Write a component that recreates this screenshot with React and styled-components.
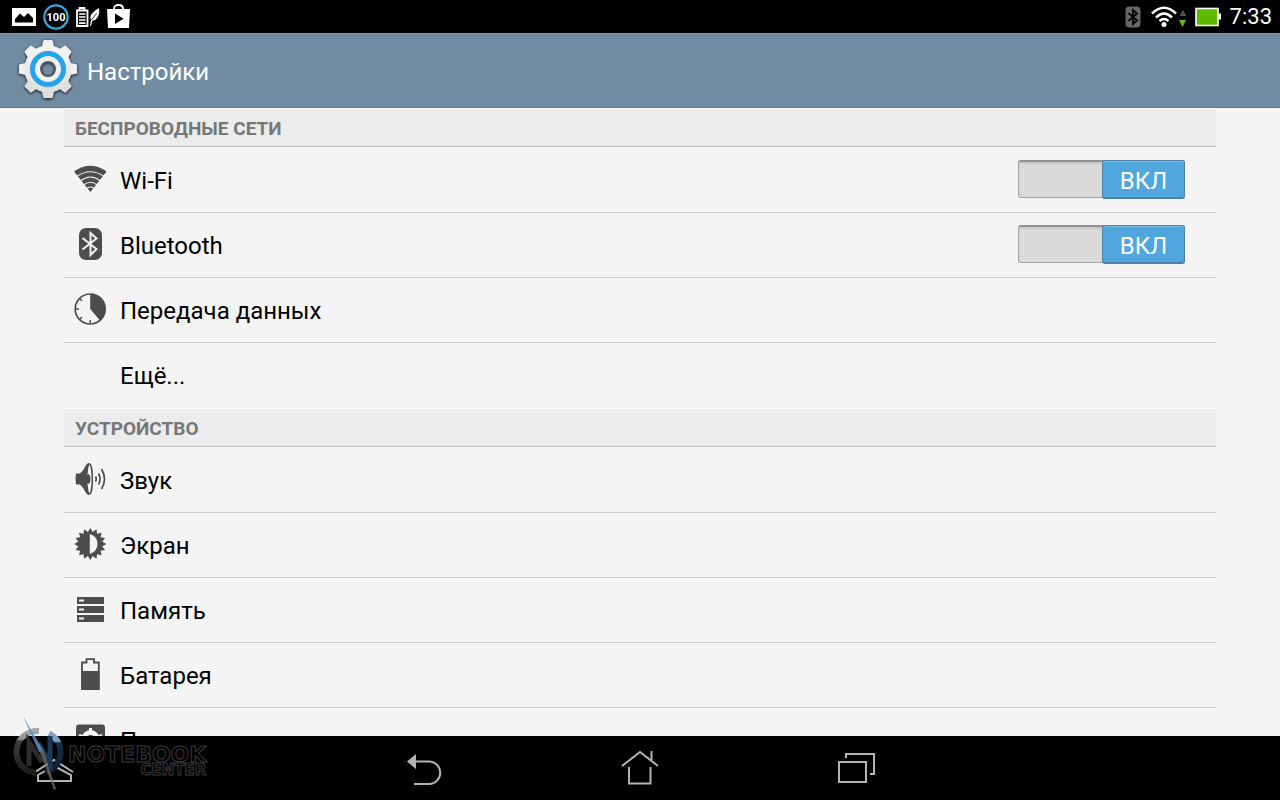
import React, { useState } from 'react';
import styled, { createGlobalStyle } from 'styled-components';

const GlobalStyle = createGlobalStyle`
    * {
        box-sizing: border-box;
    }
    body {
        margin: 0;
        background: #f4f4f4;
        font-family: Roboto, "Noto Sans", sans-serif;
    }
    svg {
        display: block;
        flex: none;
    }
`

const Screen = styled.div`
    position: relative;
    display: flex;
    flex-direction: column;
    height: 100vh;
    overflow: hidden;
`

const StatusBar = styled.div`
    display: flex;
    flex: none;
    align-items: center;
    justify-content: space-between;
    height: 33px;
    padding: 0 8px 0 12px;
    background: #000;
    color: #fff;
    font-size: 22px;
    line-height: 32px;
`

const StatusGroup = styled.div`
    display: flex;
    align-items: center;
    gap: ${props => props.$gap}px;
`

const TitleBar = styled.header`
    display: flex;
    flex: none;
    align-items: center;
    gap: 7px;
    height: 75px;
    padding: 0 16px;
    background: #718ba3;
    border-top: 1px solid #8299ae;
    border-bottom: 1px solid #5f7890;
    color: #fff;
    svg {
        margin-bottom: 2px;
    }
    h1 {
        margin: 2px 0 0;
        font-size: 24px;
        font-weight: 400;
        line-height: 32px;
    }
`

const Content = styled.main`
    flex: 1;
    min-height: 0;
    padding: 0 5%;
    overflow: hidden;
`

const SectionTitle = styled.h2`
    height: 39px;
    margin: 0 0 1px;
    padding: 2px 11px 0;
    background: #ececec;
    border-top: 1px solid #fcfcfc;
    border-bottom: 1px solid #bdbdbd;
    color: #777;
    font-size: 19px;
    font-weight: 700;
    line-height: 36px;
`

const List = styled.ul`
    margin: 0;
    padding: 0;
    list-style: none;
`

const Row = styled.li`
    display: flex;
    align-items: center;
    height: 65px;
    padding: 0 31px 0 10px;
    border-bottom: 1px solid #cdcdcd;
    color: #000;
    font-size: 24px;
    line-height: 32px;
    &:last-child {
        border-color: transparent;
    }
`

const RowIcon = styled.span`
    width: 32px;
    height: 32px;
    margin: 0 14px 2px 0;
`

const RowLabel = styled.label`
    flex: 1;
    padding-top: 2px;
`

const RowLink = styled.a`
    flex: 1;
    padding-top: 2px;
    color: inherit;
    text-decoration: none;
`

const Toggle = styled.span`
    display: flex;
    position: relative;
    width: 167px;
    height: 39px;
    margin-bottom: 2px;
    justify-content: ${props => props.$on ? 'flex-end' : 'flex-start'};
    input {
        position: absolute;
        inset: 0;
        width: 100%;
        height: 38px;
        margin: 0;
        appearance: none;
        background: #dbdbdb;
        border: 1px solid #a3a3a3;
        border-top: 2px solid #909090;
        border-radius: 3px;
        box-shadow: inset 0 2px 2px #c8c8c8;
    }
`

const Thumb = styled.span`
    position: relative;
    width: 83px;
    height: 39px;
    background: ${props => props.$on ? '#50a7de' : '#999'};
    border: 1px solid #4f7fa3;
    border-bottom-width: 2px;
    border-radius: 3px;
    box-shadow: inset 0 1px 0 #79bce6;
    color: #fff;
    font-size: 24px;
    line-height: 40px;
    text-align: center;
    pointer-events: none;
`

const NavBar = styled.nav`
    display: grid;
    flex: none;
    grid-template-columns: 1fr auto 1fr;
    height: 64px;
    background: #000;
`

const NavGroup = styled.div`
    display: flex;
`

const NavButton = styled.button`
    display: flex;
    align-items: center;
    justify-content: center;
    width: ${props => props.$wide ? 216 : 108}px;
    height: 64px;
    padding: 0;
    background: none;
    border: 0;
`

const Watermark = styled.div`
    position: absolute;
    left: 12px;
    bottom: 8px;
    display: flex;
    align-items: flex-end;
    pointer-events: none;
`

const WatermarkText = styled.div`
    display: flex;
    flex-direction: column;
    align-items: flex-end;
    margin: 0 0 15px 4px;
    color: #000;
    -webkit-text-stroke: 1px #3a3a3a;
    font-family: "DejaVu Sans", sans-serif;
    font-size: 22px;
    font-weight: 700;
    line-height: 18px;
    small {
        font-size: 15px;
        line-height: 13px;
    }
`

// closed outline running between two radii, used for the sun rays
const star = (count, cx, cy, outer, inner) => {
    const points = [];
    for (let i = 0; i < count * 2; i++) {
        const r = i % 2 ? inner : outer;
        const a = Math.PI * i / count - Math.PI / 2;
        points.push(`${(cx + r * Math.cos(a)).toFixed(2)},${(cy + r * Math.sin(a)).toFixed(2)}`);
    }
    return points.join(' ');
}

const GREY = '#4d4d4d';
const TEETH = [0, 45, 90, 135, 180, 225, 270, 315];

const GearIcon = () => (
    <svg width='64' height='68' viewBox='0 0 64 68'>
        <defs>
            <linearGradient id='gearFill' x1='0' y1='0' x2='0' y2='1'>
                <stop offset='0' stopColor='#f6f6f6' />
                <stop offset='1' stopColor='#dedede' />
            </linearGradient>
            <mask id='gearHole'>
                <rect width='64' height='68' fill='#fff' />
                <circle cx='32' cy='33' r='7' fill='#000' />
            </mask>
            <filter id='gearShadow' x='-20%' y='-20%' width='140%' height='140%'>
                <feDropShadow dx='0' dy='1' stdDeviation='1.5' floodColor='#111' floodOpacity='1' />
            </filter>
        </defs>
        <g filter='url(#gearShadow)'>
            <g mask='url(#gearHole)'>
                {TEETH.map(deg => (
                    <path
                        key={deg}
                        d='M22 15 L26.2 10 L27.4 4.5 Q27.6 4 28.5 4 H35.5 Q36.4 4 36.6 4.5 L37.8 10 L42 15 Z'
                        fill={deg > 90 && deg < 270 ? '#dedede' : '#f0f0f0'}
                        transform={`rotate(${deg} 32 33)`}
                    />
                ))}
                <circle cx='32' cy='33' r='23.5' fill='url(#gearFill)' />
            </g>
        </g>
        <circle cx='32' cy='33' r='15.2' fill='none' stroke='#20a5ee' strokeWidth='4.8' />
        <circle cx='32' cy='33' r='17.8' fill='none' stroke='#1784c6' strokeWidth='0.6' />
        <circle cx='32' cy='33' r='10' fill='none' stroke='#f1f1f1' strokeWidth='5.6' />
        <circle cx='32' cy='33' r='7' fill='none' stroke='#4b5660' strokeWidth='2' />
    </svg>
)

const PictureIcon = () => (
    <svg width='24' height='18' viewBox='0 0 24 18'>
        <path d='M0 0 H24 V18 H0 Z' fill='#fff' />
        <path d='M3 14.5 V11 L8 5.5 L12 9 L16 5 L21 10 V14.5 Z' fill='#000' />
    </svg>
)

const PercentIcon = () => (
    <svg width='26' height='26' viewBox='0 0 26 26'>
        <circle cx='13' cy='13' r='11.7' fill='none' stroke='#35a9dc' strokeWidth='2.2' />
        <text x='13' y='17' fill='#fff' fontSize='11' fontWeight='700' textAnchor='middle'>100</text>
    </svg>
)

const EcoIcon = () => (
    <svg width='24' height='20' viewBox='0 0 24 20'>
        <path d='M3.5 3 V1 H8.5 V3 M1 3.5 H11.5 V19 H1 Z' fill='none' stroke='#fff' strokeWidth='1.8' />
        <path d='M3 7 H9.5 M3 10 H9.5 M3 13 H9.5 M3 16.2 H9.5' stroke='#fff' strokeWidth='1.7' />
        <path d='M23 1 Q24 7 21 11 Q19 14 16.5 13.5 L15 19 H14 L15 13 Q13.5 9 16 6.5 Q19 3 23 1 Z' fill='#fff' />
        <path d='M15.5 13 L20.5 6.5' stroke='#000' strokeWidth='0.8' />
    </svg>
)

const StoreIcon = () => (
    <svg width='23' height='26' viewBox='0 0 23 26'>
        <path d='M7 6 V4.5 Q7 1 11.5 1 Q16 1 16 4.5 V6' fill='none' stroke='#fff' strokeWidth='1.8' />
        <path d='M0 5 H23 L22 24 H1 Z' fill='#fff' />
        <path d='M8 9.5 L16.5 14.7 L8 20 Z' fill='#000' />
    </svg>
)

const StatusBluetooth = () => (
    <svg width='16' height='22' viewBox='0 0 16 22'>
        <rect x='0.5' y='0.5' width='15' height='21' rx='4' fill='#666' />
        <path d='M3.5 7 L12 14.5 L8 18 V4 L12 7.5 L3.5 15' fill='none' stroke='#000' strokeWidth='1.8' />
    </svg>
)

const StatusWifi = () => (
    <svg width='36' height='24' viewBox='0 0 36 24'>
        <path d='M2 8.5 Q14 -3 26 8.5 M6 12.5 Q14 4.5 22 12.5 M9.5 16 Q14 12 18.5 16' fill='none' stroke='#fff' strokeWidth='2.5' />
        <circle cx='14' cy='19.5' r='2.5' fill='#fff' />
        <path d='M29.5 11 L33 5 L36.5 11 Z' fill='#4f4f4f' />
        <path d='M29 15 H36 L32.5 22 Z' fill='#60bd10' />
    </svg>
)

const StatusBattery = () => (
    <svg width='26' height='20' viewBox='0 0 26 20'>
        <rect x='1' y='1.5' width='22' height='17' fill='#5db800' stroke='#fff' strokeWidth='1.6' />
        <rect x='23' y='6.5' width='3' height='6' fill='#fff' />
    </svg>
)

const WifiIcon = () => (
    <svg width='32' height='32' viewBox='0 0 32 32'>
        <path d='M0 8.5 Q16 -3.2 32.6 8.5 L16.4 29 Z' fill={GREY} />
        <path d='M3 13.3 Q16.4 4.1 29.8 13.3 M6.5 17.7 Q16.4 10.3 26.3 17.7 M10 21.7 Q16.4 16.7 22.8 21.7 M13 25.3 Q16.4 22.7 19.8 25.3' fill='none' stroke='#f4f4f4' strokeWidth='1.1' />
    </svg>
)

const BluetoothIcon = () => (
    <svg width='32' height='32' viewBox='0 0 32 32'>
        <rect x='5' y='0' width='23' height='32' rx='7' fill={GREY} />
        <path d='M8.5 10 L22.5 21 L16.5 27 V5 L22.5 10.5 L8.5 21.5' fill='none' stroke='#f4f4f4' strokeWidth='2' />
    </svg>
)

const DataIcon = () => (
    <svg width='32' height='32' viewBox='0 0 32 32'>
        <circle cx='16.2' cy='16' r='15' fill='none' stroke={GREY} strokeWidth='1.7' />
        <path d='M16.2 16 V1 A15 15 0 0 1 26 27.5 Z' fill={GREY} />
        <path d='M2 16 H5 M16.2 30 V27 M6 6 L8 8 M6 26 L8 24' stroke={GREY} strokeWidth='1.5' />
    </svg>
)

const SoundIcon = () => (
    <svg width='32' height='32' viewBox='0 0 32 32'>
        <path d='M2 10.5 H6 Q10 7 12 2 Q13.5 0 15 0 V32 Q13.5 32 12 30 Q10 25 6 21.5 H2 Q1 16 2 10.5 Z' fill={GREY} />
        <ellipse cx='15.5' cy='16' rx='2.8' ry='15' fill='#f4f4f4' stroke={GREY} strokeWidth='1.5' />
        <path d='M15 11 Q18 16 15 21 L13 20 V12 Z' fill={GREY} />
        <path d='M21.5 13.5 Q23 16 21.5 18.5 M24.5 10.5 Q27.5 16 24.5 21.5 M27.5 6 Q33.5 16 27.5 26' fill='none' stroke={GREY} strokeWidth='1.7' />
    </svg>
)

const DisplayIcon = () => (
    <svg width='32' height='32' viewBox='0 0 32 32'>
        <polygon points={star(16, 16.3, 16, 16, 12.2)} fill={GREY} />
        <path d='M15.8 6 A11 10.5 0 0 1 15.8 26 Z' fill='#f4f4f4' />
    </svg>
)

const StorageIcon = () => (
    <svg width='32' height='32' viewBox='0 0 32 32'>
        {[4, 13, 22].map(y => (
            <g key={y}>
                <rect x='3' y={y} width='27' height='7' fill={GREY} />
                <rect x='5' y={y + 2.5} width='5' height='2' fill='#f4f4f4' />
            </g>
        ))}
    </svg>
)

const BatteryIcon = () => (
    <svg width='32' height='32' viewBox='0 0 32 32'>
        <path d='M8 31 V4.5 H12.5 V1.2 H20 V4.5 H24.8 V31 Z' fill='none' stroke={GREY} strokeWidth='1.8' />
        <rect x='7.5' y='13' width='18' height='18.5' fill={GREY} />
    </svg>
)

const AppsIcon = () => (
    <svg width='32' height='32' viewBox='0 0 32 32'>
        <rect x='2' y='1.5' width='29' height='30' rx='3' fill={GREY} />
        <circle cx='16.5' cy='16' r='6.5' fill='none' stroke='#f4f4f4' strokeWidth='5' />
        <path d='M16.5 5 V9 M5 12 L9 14 M28 12 L24 14 M9 23 L11 20 M24 23 L22 20' stroke='#f4f4f4' strokeWidth='3' />
    </svg>
)

const NavIcon = ({ children }) => (
    <svg width='40' height='40' viewBox='0 0 40 40' fill='none' stroke='#b3b3b3' strokeWidth='2'>
        {children}
    </svg>
)

const WatermarkLogo = () => (
    <svg width='52' height='76' viewBox='0 0 52 76'>
        <defs>
            <linearGradient id='ringLeft' x1='0' y1='0' x2='0' y2='1'>
                <stop offset='0' stopColor='#a8a8a8' />
                <stop offset='0.2' stopColor='#8e8e8e' />
                <stop offset='0.24' stopColor='#3c3c3c' />
                <stop offset='1' stopColor='#1d1d1d' />
            </linearGradient>
            <linearGradient id='ringRight' x1='0' y1='0' x2='0' y2='1'>
                <stop offset='0' stopColor='#7fa3c4' />
                <stop offset='0.2' stopColor='#7fa3c4' />
                <stop offset='0.24' stopColor='#14304a' />
                <stop offset='1' stopColor='#0a1c2e' />
            </linearGradient>
        </defs>
        <path d='M27 15 A21 21 0 0 0 24 57' fill='none' stroke='url(#ringLeft)' strokeWidth='6' />
        <path d='M37 17.5 A21 21 0 0 1 33 56.5' fill='none' stroke='url(#ringRight)' strokeWidth='6' />
        <path d='M17 50 V26 L30 46' fill='none' stroke='#2c2c2c' strokeWidth='5' />
        <path d='M26 27 L38 47 V20' fill='none' stroke='#1c3a57' strokeWidth='5' />
        <path d='M11 0 L31 34 L27 36 Z' fill='#5e91bb' fillOpacity='0.85' />
        <path d='M27 34 L31 33 L44 73 L42 74 Z' fill='#77706b' fillOpacity='0.7' />
    </svg>
)

const wireless = [
    { id: 'wifi', label: 'Wi-Fi', icon: <WifiIcon />, toggle: true },
    { id: 'bluetooth', label: 'Bluetooth', icon: <BluetoothIcon />, toggle: true },
    { id: 'data', label: 'Передача данных', icon: <DataIcon /> },
    { id: 'more', label: 'Ещё...' },
];

const device = [
    { id: 'sound', label: 'Звук', icon: <SoundIcon /> },
    { id: 'display', label: 'Экран', icon: <DisplayIcon /> },
    { id: 'storage', label: 'Память', icon: <StorageIcon /> },
    { id: 'battery', label: 'Батарея', icon: <BatteryIcon /> },
    { id: 'apps', label: 'Приложения', icon: <AppsIcon /> },
];

function Section(props) {
    const { title, items, values, change } = props;

    return <section>
        <SectionTitle>{title}</SectionTitle>
        <List>
            {items.map(item => (
                <Row key={item.id}>
                    <RowIcon>{item.icon}</RowIcon>
                    {item.toggle
                        ? <RowLabel htmlFor={item.id}>{item.label}</RowLabel>
                        : <RowLink href={`#${item.id}`}>{item.label}</RowLink>}
                    {item.toggle && <Toggle $on={values[item.id]}>
                        <input
                            id={item.id}
                            name={item.id}
                            type='checkbox'
                            checked={values[item.id]}
                            onChange={change}
                        />
                        <Thumb $on={values[item.id]}>{values[item.id] ? 'ВКЛ' : 'ВЫКЛ'}</Thumb>
                    </Toggle>}
                </Row>
            ))}
        </List>
    </section>
}

export default function App() {
    const [values, setValues] = useState({ wifi: true, bluetooth: true });

    const onChange = evt => {
        const { name, checked } = evt.target;
        setValues({ ...values, [name]: checked });
    }

    return <Screen>
        <GlobalStyle />
        <StatusBar>
            <StatusGroup $gap={7}>
                <PictureIcon />
                <PercentIcon />
                <EcoIcon />
                <StoreIcon />
            </StatusGroup>
            <StatusGroup $gap={9}>
                <StatusBluetooth />
                <StatusWifi />
                <StatusBattery />
                <span>7:33</span>
            </StatusGroup>
        </StatusBar>
        <TitleBar>
            <GearIcon />
            <h1>Настройки</h1>
        </TitleBar>
        <Content>
            <Section title='БЕСПРОВОДНЫЕ СЕТИ' items={wireless} values={values} change={onChange} />
            <Section title='УСТРОЙСТВО' items={device} values={values} change={onChange} />
        </Content>
        <NavBar>
            <NavGroup>
                <NavButton type='button' aria-label='Меню'>
                    <NavIcon>
                        <path d='M1 24 L20 12 L39 24' />
                        <path d='M4 27 L20 18 L37 27 V33 H4 Z' />
                    </NavIcon>
                </NavButton>
            </NavGroup>
            {/* system keys */}
            <NavGroup>
                <NavButton type='button' $wide aria-label='Назад'>
                    <NavIcon>
                        <path d='M8 13.5 H26 A11.3 11.3 0 0 1 26 36 H10' />
                        <path d='M3 13.5 L12 6 V21 Z' fill='#b3b3b3' stroke='none' />
                    </NavIcon>
                </NavButton>
                <NavButton type='button' $wide aria-label='Домой'>
                    <NavIcon>
                        <path d='M2 18 L20 4 L38 18 M31.5 3 V12' />
                        <path d='M9 19 V35.5 H30.5 V19' />
                    </NavIcon>
                </NavButton>
                <NavButton type='button' $wide aria-label='Недавние'>
                    <NavIcon>
                        <path d='M3 14 H30 V34 H3 Z' />
                        <path d='M10 10 V6 H38 V26 H34' />
                    </NavIcon>
                </NavButton>
            </NavGroup>
        </NavBar>
        <Watermark>
            <WatermarkLogo />
            <WatermarkText>
                <span>NOTEBOOK</span>
                <small>CENTER</small>
            </WatermarkText>
        </Watermark>
    </Screen>
}
